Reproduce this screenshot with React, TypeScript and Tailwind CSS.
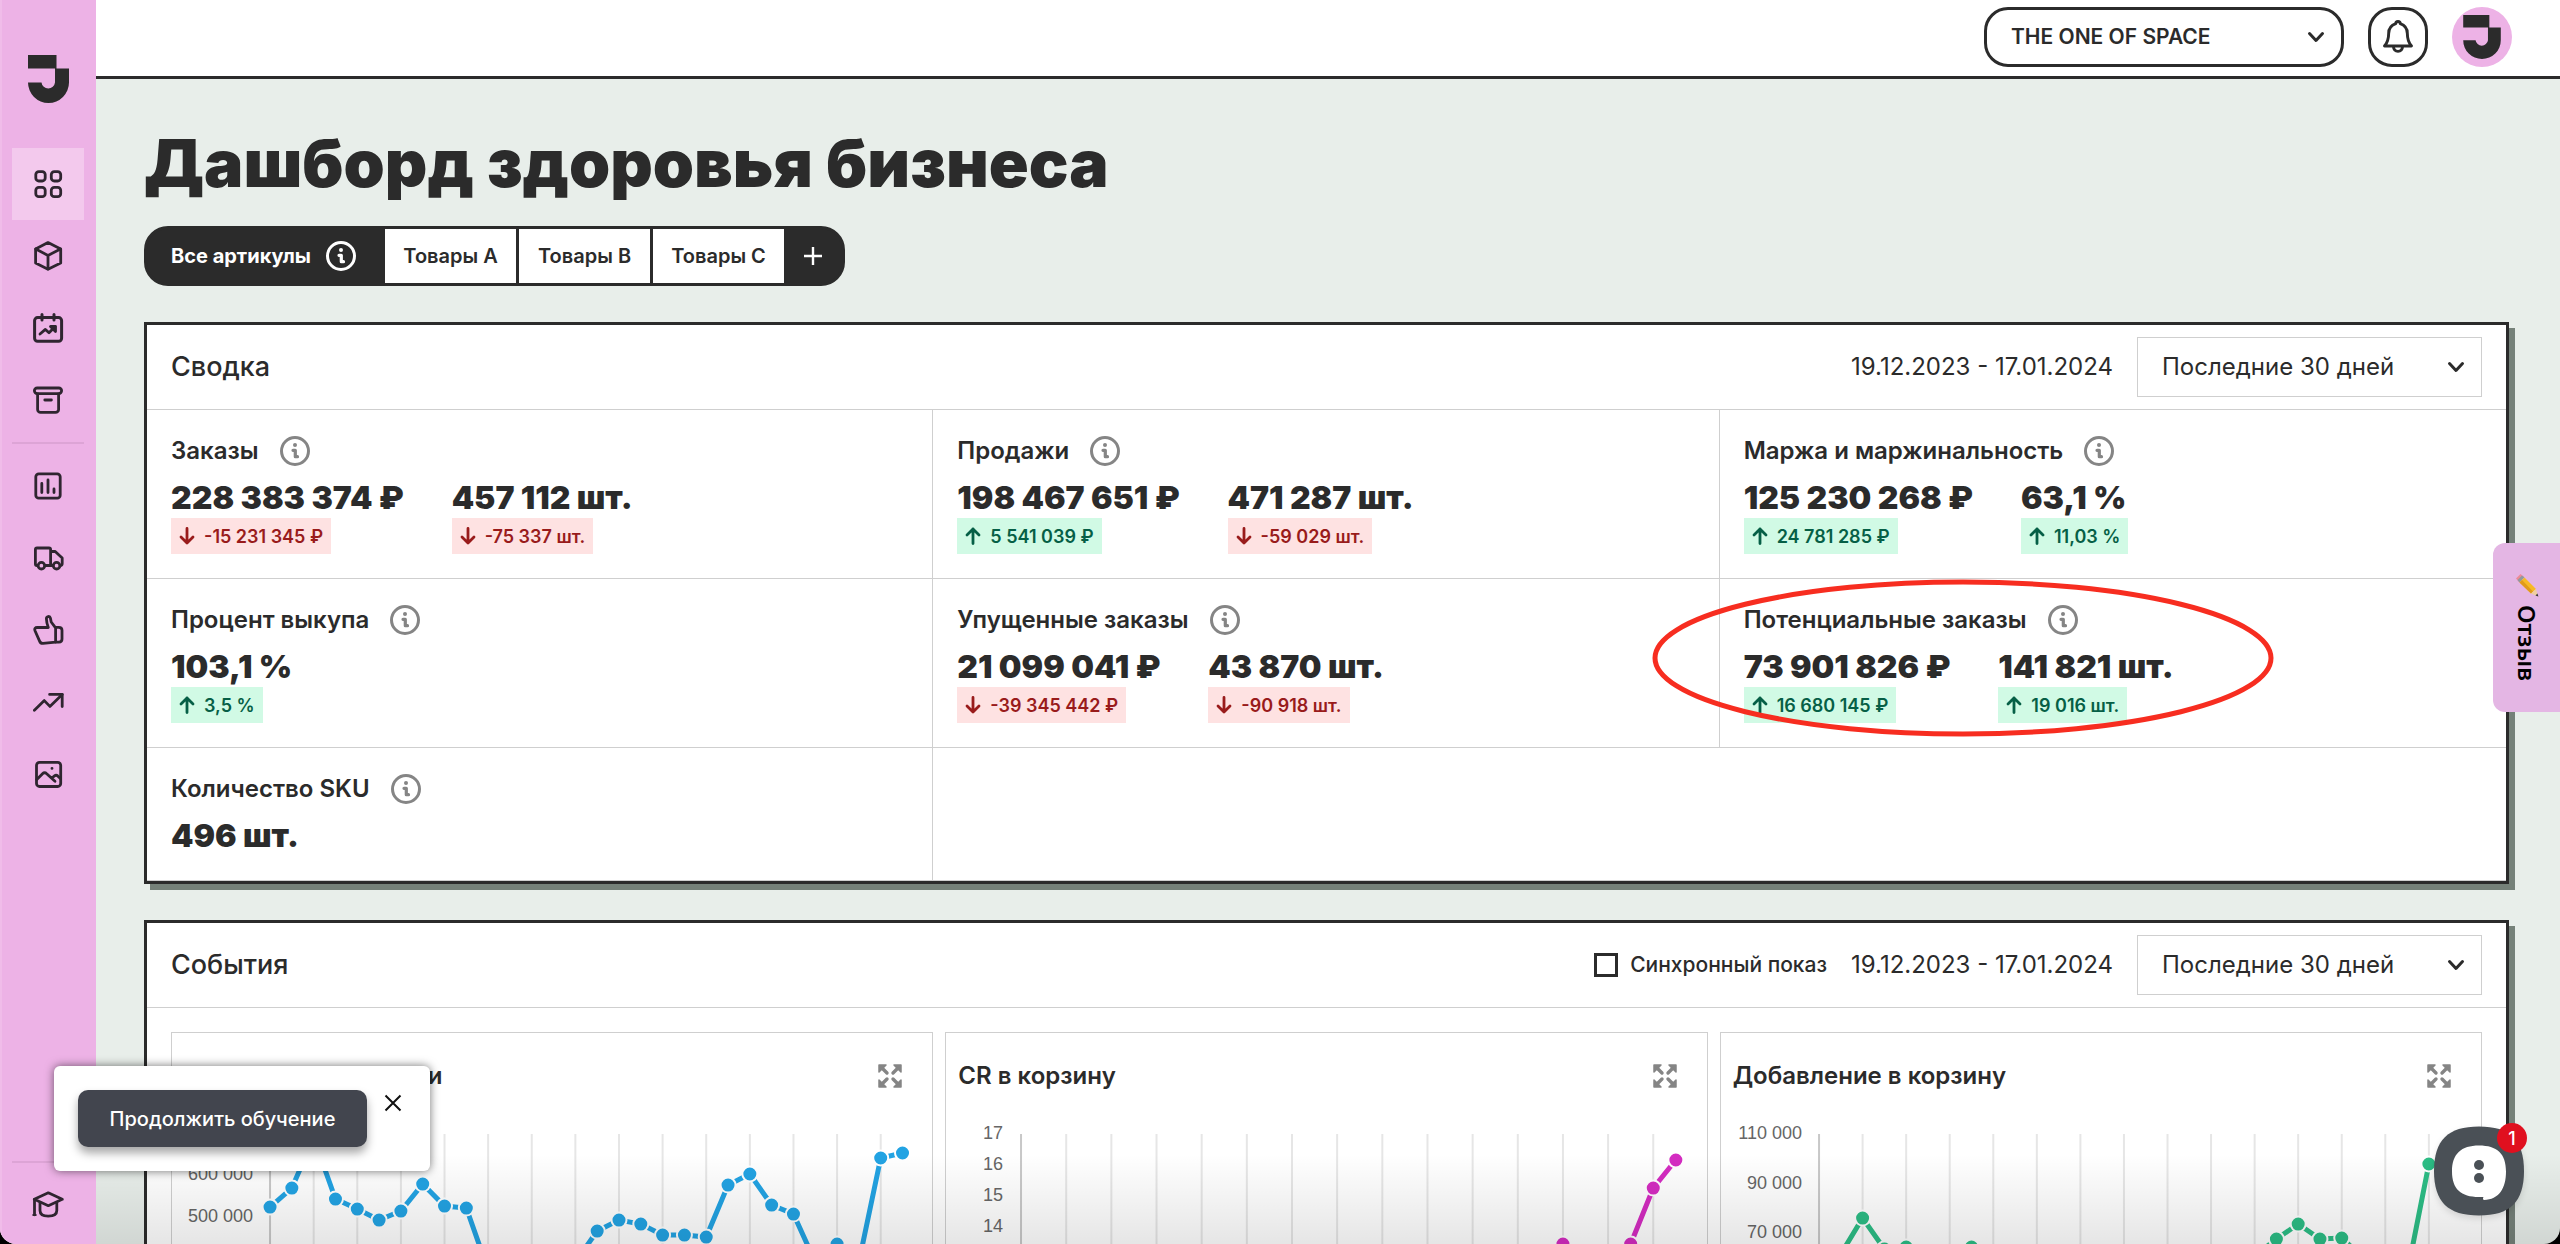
import { useState } from 'react'
import type { ReactNode } from 'react'

interface MetricValue {
  value: string
  delta?: string
  up?: boolean
}

interface Metric {
  title: string
  values: MetricValue[]
}

interface ChartData {
  title: string
  color: string
  labelX: number
  startX: number
  step: number
  labels: { text: string; y: number }[]
  points: number[]
}

const metrics: Metric[] = [
  {
    title: 'Заказы',
    values: [
      { value: '228 383 374 ₽', delta: '-15 231 345 ₽' },
      { value: '457 112 шт.', delta: '-75 337 шт.' },
    ],
  },
  {
    title: 'Продажи',
    values: [
      { value: '198 467 651 ₽', delta: '5 541 039 ₽', up: true },
      { value: '471 287 шт.', delta: '-59 029 шт.' },
    ],
  },
  {
    title: 'Маржа и маржинальность',
    values: [
      { value: '125 230 268 ₽', delta: '24 781 285 ₽', up: true },
      { value: '63,1 %', delta: '11,03 %', up: true },
    ],
  },
  {
    title: 'Процент выкупа',
    values: [{ value: '103,1 %', delta: '3,5 %', up: true }],
  },
  {
    title: 'Упущенные заказы',
    values: [
      { value: '21 099 041 ₽', delta: '-39 345 442 ₽' },
      { value: '43 870 шт.', delta: '-90 918 шт.' },
    ],
  },
  {
    title: 'Потенциальные заказы',
    values: [
      { value: '73 901 826 ₽', delta: '16 680 145 ₽', up: true },
      { value: '141 821 шт.', delta: '19 016 шт.', up: true },
    ],
  },
  {
    title: 'Количество SKU',
    values: [{ value: '496 шт.' }],
  },
]

// y values are in chart pixels, counted down from the top of the drawing
const charts: ChartData[] = [
  {
    title: 'Просмотры карточки',
    color: '#22a3e3',
    labelX: 81,
    startX: 98,
    step: 21.8,
    labels: [
      { text: '600 000', y: 56 },
      { text: '500 000', y: 98 },
    ],
    points: [
      89, 70, 20, 81, 91, 102, 93, 66, 88, 90, 152, 170, 175, 170, 144, 113, 102, 106, 117, 117, 119, 67, 56, 87,
      96, 144, 126, 144, 40, 35,
    ],
  },
  {
    title: 'CR в корзину',
    color: '#d42cc1',
    labelX: 57,
    startX: 75,
    step: 22.57,
    labels: [
      { text: '17', y: 15 },
      { text: '16', y: 46 },
      { text: '15', y: 77 },
      { text: '14', y: 108 },
    ],
    points: [
      190, 185, 188, 180, 176, 182, 190, 186, 180, 175, 178, 184, 190, 186, 182, 178, 175, 180, 186, 182, 176, 170,
      165, 150, 126, 148, 152, 126, 70, 42,
    ],
  },
  {
    title: 'Добавление в корзину',
    color: '#2cbd85',
    labelX: 81,
    startX: 98,
    step: 21.77,
    labels: [
      { text: '110 000', y: 15 },
      { text: '90 000', y: 65 },
      { text: '70 000', y: 114 },
    ],
    points: [
      160, 136, 100, 131, 129, 140, 138, 129, 142, 150, 160, 165, 170, 172, 168, 165, 160, 158, 152, 145, 138, 121,
      106, 121, 120, 140, 150, 156, 46, 40,
    ],
  },
]

function Icon({ children }: { children: ReactNode }) {
  return (
    <svg
      viewBox="0 0 32 32"
      className="size-8"
      fill="none"
      stroke="#2f2530"
      strokeWidth="2.8"
      strokeLinecap="round"
      strokeLinejoin="round"
      aria-hidden="true"
    >
      {children}
    </svg>
  )
}

const mainNav = [
  {
    name: 'Дашборд',
    icon: (
      <Icon>
        <rect x="3.8" y="3.6" width="9.4" height="9.4" rx="3" />
        <rect x="19.3" y="3.6" width="9.4" height="9.4" rx="3" />
        <rect x="3.8" y="19.3" width="9.4" height="9.4" rx="3" />
        <rect x="19.3" y="19.3" width="9.4" height="9.4" rx="3" />
      </Icon>
    ),
  },
  {
    name: 'Товары',
    icon: (
      <Icon>
        <path d="M16 2.6 28.7 9v14L16 29.2 3.6 23V9Z" />
        <path d="M3.8 9 16 15.4 28.5 9M16 15.4V29" />
      </Icon>
    ),
  },
  {
    name: 'Планирование',
    icon: (
      <Icon>
        <rect x="2.6" y="5.6" width="27" height="23.6" rx="3" strokeWidth="3" />
        <path d="M10 2.5V8M22 2.5V8" strokeWidth="3" />
        <path d="m8 22 5.4-4.6 3.6 3.4 6-6" />
        <path d="M18.5 14.5H23.5V19.5L21 17Z" fill="#2f2530" />
      </Icon>
    ),
  },
  {
    name: 'Склад',
    icon: (
      <Icon>
        <rect x="2.4" y="4" width="27.2" height="5.6" rx="2.8" />
        <path d="M5.6 10v15.4a3 3 0 0 0 3 3h15a3 3 0 0 0 3-3V10M12.8 16h6.6" />
      </Icon>
    ),
  },
]

const toolsNav = [
  {
    name: 'Отчёты',
    icon: (
      <Icon>
        <rect x="3.8" y="3.8" width="24.4" height="24.4" rx="3" />
        <path d="M9.8 13.5v9M16 10v12.5M22 19v3.5" />
      </Icon>
    ),
  },
  {
    name: 'Поставки',
    icon: (
      <Icon>
        <path d="M5.8 23.5H5a1.6 1.6 0 0 1-1.6-1.6V7.6A1.6 1.6 0 0 1 5 6h12a1.6 1.6 0 0 1 1.6 1.6v15.9H13M18.6 9.5h4.6l7 6.5v5.5a2 2 0 0 1-2 2M18.6 23.5h2.4" />
        <circle cx="9.4" cy="23.7" r="3.3" />
        <circle cx="24.6" cy="23.7" r="3.3" />
      </Icon>
    ),
  },
  {
    name: 'Отзывы',
    icon: (
      <Icon>
        <path d="M16.3 13.5H5.2c-2 0-3 1.2-2.3 3l4.7 10.6c.7 1.7 1.8 2.4 3.4 2.3l12.6-1.3V13.8L19.2 8l-.8-4c-.6-2.4-4.1-1.8-4 .8.1 3 .7 5.7 1.9 8.7Z" />
        <path d="M23.6 13.3h3.2c2 0 3.2 1 3.2 3v8.8c0 2-1 3-3 3h-3.4" />
      </Icon>
    ),
  },
  {
    name: 'Продвижение',
    icon: (
      <Icon>
        <path d="m2.4 24.2 9.9-9.6 5.6 5.8L30.2 8.4" />
        <path d="M17.6 8.4h12.6v12.2" />
      </Icon>
    ),
  },
  {
    name: 'Контент',
    icon: (
      <Icon>
        <rect x="4.5" y="4.3" width="24.2" height="24.2" rx="3" />
        <path d="m4.8 21.5 6-6a2.5 2.5 0 0 1 3.6 0l8.6 7.8M19.8 20l2.7-2.2a2.5 2.5 0 0 1 3.2.1l2.7 2.6M20 10.3v.1" />
      </Icon>
    ),
  },
]

function Logo({ className }: { className: string }) {
  return (
    <svg viewBox="0 0 41 48" className={className} fill="#2b2b2b" aria-hidden="true">
      <path d="M0 0H28.5V13.5H41V27.5A20.5 20.5 0 0 1 0 27.5H13.5a6.8 6.8 0 0 0 13.5 0V13.5H0Z" />
    </svg>
  )
}

function InfoIcon({ className }: { className: string }) {
  return (
    <svg viewBox="0 0 30 30" className={className} fill="none" stroke="currentColor" aria-hidden="true">
      <circle cx="15" cy="15" r="13.5" strokeWidth="3" />
      <path d="M13 14.3h2.3v6.4h2.2" strokeWidth="3.2" strokeLinecap="round" strokeLinejoin="round" />
      <circle cx="15" cy="9" r="2" fill="currentColor" stroke="none" />
    </svg>
  )
}

function Chevron({ className }: { className: string }) {
  return (
    <svg viewBox="0 0 20 20" className={className} fill="none" stroke="#2b2b2b" strokeWidth="3" aria-hidden="true">
      <path d="m3.5 6.5 6.5 7 6.5-7" strokeLinecap="round" strokeLinejoin="round" />
    </svg>
  )
}

function NavButton({ name, active, children }: { name: string; active?: boolean; children: ReactNode }) {
  return (
    <button
      aria-label={name}
      className={`flex size-[72px] items-center justify-center ${active ? 'bg-[#f3c9ed]' : ''}`}
    >
      {children}
    </button>
  )
}

function Sidebar() {
  return (
    <nav className="flex w-24 shrink-0 flex-col items-center border-l-2 border-[#f0bce9] bg-[#edb2e6] pr-[2px] pb-[3px]">
      <a href="#home" aria-label="На главную" className="mt-[55px] mb-[45px]">
        <Logo className="h-12 w-[41px]" />
      </a>
      {mainNav.map((item, i) => (
        <NavButton key={item.name} name={item.name} active={i === 0}>
          {item.icon}
        </NavButton>
      ))}
      <hr className="my-[6px] w-[72px] border-t-2 border-[#dda4d6]" />
      {toolsNav.map((item) => (
        <NavButton key={item.name} name={item.name}>
          {item.icon}
        </NavButton>
      ))}
      <hr className="mt-auto mb-[6px] w-[72px] border-t-2 border-[#dda4d6]" />
      <NavButton name="Обучение">
        <Icon>
          <path d="m16.3 3.8 14 6.5-14 6.4-14-6.4Z" />
          <path d="M2.5 10.5v15.3M8 13.5v8c0 3.5 2.6 5.6 8.2 5.6s8.6-2.1 8.6-5.6v-8" />
          <path d="M2.5 25v2" strokeWidth="4" strokeLinecap="butt" />
        </Icon>
      </NavButton>
    </nav>
  )
}

function Header() {
  return (
    <header className="flex h-[79px] shrink-0 items-start justify-end gap-6 border-b-[3px] border-[#2b2b2b] bg-white pt-[7px] pr-12">
      <div className="relative w-[360px]">
        <select
          aria-label="Компания"
          className="h-[60px] w-full appearance-none rounded-3xl border-[3px] border-[#2b2b2b] bg-white px-6 text-[21px] font-semibold"
        >
          <option>THE ONE OF SPACE</option>
        </select>
        <Chevron className="pointer-events-none absolute top-5 right-[18px] size-5" />
      </div>
      <button
        aria-label="Уведомления"
        className="flex size-[60px] items-center justify-center rounded-3xl border-[3px] border-[#2b2b2b]"
      >
        <svg viewBox="0 0 32 32" className="size-9" fill="none" stroke="#2b2b2b" strokeWidth="2.6" strokeLinejoin="round">
          <path d="M14 4.2a2 2 0 0 1 4 0c4.2 1.5 6.3 4.6 6.3 8.6 0 5 1 8 3.7 11.2H4c2.7-3.2 3.7-6.2 3.7-11.2 0-4 2.1-7.1 6.3-8.6Z" />
          <path d="M12 24.5c0 2.6 1.6 4.3 4 4.3s4-1.7 4-4.3" />
        </svg>
      </button>
      <button
        aria-label="Профиль"
        className="flex size-[60px] items-center justify-center rounded-full bg-[#edb2e6]"
      >
        <Logo className="h-11 w-[38px]" />
      </button>
    </header>
  )
}

function Tabs() {
  const [active, setActive] = useState('Все артикулы')
  return (
    <div className="mt-[27px] flex h-[60px] w-fit overflow-hidden rounded-3xl border-[3px] border-[#2b2b2b] bg-[#2b2b2b] text-[20px] font-semibold">
      <button
        onClick={() => setActive('Все артикулы')}
        aria-pressed={active === 'Все артикулы'}
        className="flex w-[238px] items-center gap-[15px] pl-6 font-bold text-white"
      >
        Все артикулы
        <InfoIcon className="size-[30px]" />
      </button>
      <div className="flex gap-[3px]">
        {['Товары А', 'Товары В', 'Товары С'].map((name) => (
          <button key={name} onClick={() => setActive(name)} className="w-[131px] bg-white">
            {name}
          </button>
        ))}
      </div>
      <button aria-label="Добавить группу" className="flex w-[58px] items-center justify-center">
        <svg viewBox="0 0 18 18" className="size-[18px]" stroke="white" strokeWidth="2.4">
          <path d="M9 0v18M0 9h18" />
        </svg>
      </button>
    </div>
  )
}

function Period({ id }: { id: string }) {
  return (
    <>
      <span>19.12.2023 - 17.01.2024</span>
      <div className="relative w-[345px]">
        <select
          id={id}
          aria-label="Период"
          className="h-[60px] w-full appearance-none border border-[#cfcfcf] bg-white px-6"
        >
          <option>Последние 30 дней</option>
        </select>
        <Chevron className="pointer-events-none absolute top-5 right-4 size-5" />
      </div>
    </>
  )
}

function Panel({ title, actions, children }: { title: string; actions: ReactNode; children: ReactNode }) {
  return (
    <section className="mt-9 shrink-0 border-[3px] border-[#2b2b2b] bg-white shadow-[6px_6px_0_#758179]">
      <div className="flex h-[85px] items-center gap-6 border-b border-[#cfcfcf] px-6 text-[24px]">
        <h2 className="mr-auto text-[27px] font-medium">{title}</h2>
        {actions}
      </div>
      {children}
    </section>
  )
}

function Delta({ text, up }: { text: string; up?: boolean }) {
  return (
    <span
      className={`flex h-9 w-fit items-center gap-[9px] px-2 text-[18px] font-semibold ${
        up ? 'bg-[#d1fae5] text-[#065f46]' : 'bg-[#fee2e2] text-[#991b1b]'
      }`}
    >
      <svg
        viewBox="0 0 16 18"
        className="h-[18px] w-4"
        fill="none"
        stroke="currentColor"
        strokeWidth="2.8"
        strokeLinecap="round"
        strokeLinejoin="round"
      >
        {up ? <path d="M8 16.5V2M2 8l6-6 6 6" /> : <path d="M8 1.5V16M2 10l6 6 6-6" />}
      </svg>
      {text}
    </span>
  )
}

function MetricCell({ metric }: { metric: Metric }) {
  return (
    <div className="border-r border-b border-[#cfcfcf] p-6 [&:nth-child(3n)]:border-r-0">
      <div className="flex h-[34px] items-center gap-[21px]">
        <h3 className="text-[24px] font-semibold">{metric.title}</h3>
        <InfoIcon className="size-[30px] text-[#858585]" />
      </div>
      <div className="mt-[10px] flex gap-12">
        {metric.values.map((v) => (
          <div key={v.value}>
            <p className="h-10 text-[32px] leading-10 font-black whitespace-nowrap">{v.value}</p>
            {v.delta && <Delta text={v.delta} up={v.up} />}
          </div>
        ))}
      </div>
    </div>
  )
}

function ChartCard({ chart }: { chart: ChartData }) {
  const coords = chart.points.map((y, i) => [chart.startX + i * chart.step, y])
  return (
    <article className="border border-[#cfcfcf]">
      <div className="flex h-[85px] items-center justify-between pr-[30px] pl-3">
        <h3 className="text-[24px] font-semibold">{chart.title}</h3>
        <button aria-label="Развернуть">
          <svg viewBox="0 0 24 24" className="size-6" fill="#858585" stroke="#858585" strokeWidth="3.4" strokeLinecap="round">
            <path d="M3.5 3.5 9 9M20.5 3.5 15 9M3.5 20.5 9 15M20.5 20.5 15 15" />
            <path
              d="M1 1h7L1 8ZM23 1h-7L23 8ZM1 23h7L1 16ZM23 23h-7l7-7Z"
              strokeWidth="1.5"
              strokeLinejoin="round"
            />
          </svg>
        </button>
      </div>
      <svg viewBox="0 0 760 220" className="w-full">
        {Array.from({ length: 15 }, (_, i) => (
          <line
            key={i}
            x1={chart.startX + i * chart.step * 2}
            x2={chart.startX + i * chart.step * 2}
            y1="16"
            y2="220"
            stroke={i === 0 ? '#c8c8c8' : '#e6e6e6'}
            strokeWidth="2"
          />
        ))}
        {chart.labels.map((l) => (
          <text
            key={l.text}
            x={chart.labelX}
            y={l.y + 6}
            textAnchor="end"
            fill="#666666"
            className="font-['Liberation_Sans',sans-serif] text-[18px]"
          >
            {l.text}
          </text>
        ))}
        <polyline points={coords.map((c) => c.join(',')).join(' ')} fill="none" stroke={chart.color} strokeWidth="5" />
        {coords.map(([x, y], i) => (
          <circle key={i} cx={x} cy={y} r="7.5" fill={chart.color} stroke="white" strokeWidth="2" />
        ))}
      </svg>
    </article>
  )
}

export default function App() {
  const [tourOpen, setTourOpen] = useState(true)

  return (
    <div className="h-screen bg-black font-['Inter','Noto_Sans',sans-serif] text-[#2b2b2b]">
      <div className="relative flex h-full overflow-hidden rounded-b-[16px] bg-[#e8eeea]">
        <Sidebar />

        <div className="flex min-w-0 flex-1 flex-col">
          <Header />
          <main className="flex min-h-0 flex-1 flex-col overflow-hidden pt-12 pr-[51px] pl-12">
            <h1 className="shrink-0 text-[66px] leading-[72px] font-black">Дашборд здоровья бизнеса</h1>
            <div className="shrink-0">
              <Tabs />
            </div>

            <Panel title="Сводка" actions={<Period id="summary-period" />}>
              <div className="relative grid grid-cols-3">
                {metrics.map((m) => (
                  <MetricCell key={m.title} metric={m} />
                ))}
                <div className="col-span-2 border-b border-[#cfcfcf]" />
                {/* Hand-drawn mark around the potential orders */}
                <svg
                  viewBox="0 0 624 158"
                  className="pointer-events-none absolute top-[169px] left-[1504px] h-[158px] w-[624px]"
                  fill="none"
                >
                  <ellipse cx="312" cy="79" rx="308" ry="76" stroke="#f72d20" strokeWidth="5" />
                </svg>
              </div>
            </Panel>

            <Panel
              title="События"
              actions={
                <>
                  <label className="flex items-center gap-3 text-[21px] font-medium">
                    <input type="checkbox" className="size-6 appearance-none border-[3px] border-[#2b2b2b] bg-white" />
                    Синхронный показ
                  </label>
                  <Period id="events-period" />
                </>
              }
            >
              <div className="grid grid-cols-3 gap-3 p-6">
                {charts.map((c) => (
                  <ChartCard key={c.title} chart={c} />
                ))}
              </div>
            </Panel>
          </main>
        </div>

        {/* Fade along the bottom edge */}
        <div className="pointer-events-none absolute right-0 bottom-0 left-24 h-[90px] bg-linear-to-t from-black/10 to-transparent" />

        {/* Feedback tab */}
        <button className="absolute top-[543px] right-0 flex h-[169px] w-[67px] items-center justify-center gap-2 rounded-l-xl bg-[#e4b6e4] font-['Noto_Sans',sans-serif] text-[24px] font-semibold text-black [writing-mode:vertical-rl]">
          <svg viewBox="0 0 24 24" className="size-6" aria-hidden="true">
            <path d="M5.5 1 1 5.5l3 3.5L9 4Z" fill="#ee8a94" />
            <path d="M7 2.5 2.5 7 4.5 9.5 9.5 4.5Z" fill="#8f9aa0" />
            <path d="m9.5 4.5-5 5L16 20.5l5-4.5Z" fill="#f7b924" />
            <path d="m7 7-2.5 2.5L16 20.5l2-2Z" fill="#e09a1b" />
            <path d="m16 20.5 7 3-2-7.5Z" fill="#f0cf9f" />
            <path d="m20.5 22.5 2.9 1.1-1-3.1Z" fill="#333333" />
          </svg>
          Отзыв
        </button>

        {/* Continue tour */}
        {tourOpen && (
          <div className="absolute bottom-[73px] left-[54px] flex h-[105px] w-[376px] items-start gap-[13px] rounded-md bg-white pt-6 pl-6 shadow-[0_0_10px_rgba(0,0,0,0.55)]">
            <button className="h-[57px] w-[289px] rounded-[10px] bg-[#42454e] text-[20px] font-medium text-white shadow-[0_6px_10px_rgba(0,0,0,0.35)]">
              Продолжить обучение
            </button>
            <button aria-label="Закрыть" onClick={() => setTourOpen(false)} className="p-1">
              <svg viewBox="0 0 18 18" className="size-[18px]" stroke="#111111" strokeWidth="2">
                <path d="m1.5 1.5 15 15M16.5 1.5l-15 15" />
              </svg>
            </button>
          </div>
        )}

        {/* Chat launcher */}
        <button aria-label="Чат" className="absolute right-9 bottom-7 h-[90px] w-[90px]">
          <svg viewBox="0 0 90 90" className="size-full drop-shadow-md" aria-hidden="true">
            <path
              d="M45 .5C76 .5 90 14 90 45S76 89.5 45 89.5 0 76 0 45 14 .5 45 .5Z"
              fill="#4a5056"
            />
            <path
              d="M45 19.5c18 0 27 8 27 26 0 17-7 28-22 28.5-1.5-.5-1-2-.5-3H45c-18 0-27-8-27-25.5s9-26 27-26Z"
              fill="white"
            />
            <circle cx="45" cy="39" r="5" fill="#4a5056" />
            <circle cx="45" cy="52" r="5" fill="#4a5056" />
          </svg>
          <span className="absolute -top-[3px] -right-[3px] flex size-[30px] items-center justify-center rounded-full bg-[#e0101f] text-[18px] font-medium text-white">
            1
          </span>
        </button>
      </div>
    </div>
  )
}
